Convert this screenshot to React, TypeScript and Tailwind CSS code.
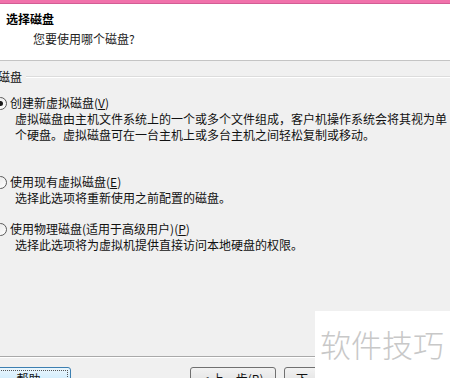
const options = [
  {
    label: "创建新虚拟磁盘",
    key: "V",
    checked: true,
    desc: [
      "虚拟磁盘由主机文件系统上的一个或多个文件组成，客户机操作系统会将其视为单",
      "个硬盘。虚拟磁盘可在一台主机上或多台主机之间轻松复制或移动。",
    ],
    gap: "mt-[10px]",
  },
  {
    label: "使用现有虚拟磁盘",
    key: "E",
    checked: false,
    desc: ["选择此选项将重新使用之前配置的磁盘。"],
    gap: "mt-[31px]",
  },
  {
    label: "使用物理磁盘(适用于高级用户)",
    key: "P",
    checked: false,
    desc: ["选择此选项将为虚拟机提供直接访问本地硬盘的权限。"],
    gap: "mt-[15px]",
  },
];

function Radio({ checked }: { checked: boolean }) {
  return (
    <span className="ml-[-6px] flex h-[13px] w-[13px] shrink-0 items-center justify-center rounded-full border border-[#5a5a5a] bg-gradient-to-br from-[#e6e6e6] to-white">
      {checked && <span className="h-[5px] w-[5px] rounded-full bg-[#1a1a1a]" />}
    </span>
  );
}

export default function App() {
  return (
    <div className="relative flex h-[378px] w-[450px] flex-col overflow-hidden bg-[#f0f0f0] font-['Noto_Sans_CJK_SC','Noto_Sans',sans-serif] text-[12px] text-[#111]">
      {/* title strip */}
      <div className="h-[4px] shrink-0 border-b border-[#d35d95] bg-[#f172ab]" />
      <div className="h-[57px] shrink-0 border-b border-[#c4c4c4] bg-white pl-[6px] pt-[6px]">
        <div className="font-bold leading-[18px] text-black">选择磁盘</div>
        <div className="ml-[27px] mt-[3px] leading-[16px] text-[#222]">您要使用哪个磁盘?</div>
      </div>

      <div className="flex-1 pt-[8px]">
        <div className="flex leading-[16px]">
          <span className="ml-[-2px]">磁盘</span>
          <span className="ml-[4px] mt-[7px] h-[2px] flex-1 border-t border-b border-t-[#dcdcdc] border-b-white" />
        </div>

        {options.map((o) => (
          <div key={o.key} className={o.gap}>
            <div className="flex items-center leading-[16px]">
              <Radio checked={o.checked} />
              <span className="ml-[3px]">
                {o.label}(<span className="underline">{o.key}</span>)
              </span>
            </div>
            <div className="ml-[15px] leading-[16px]">
              {o.desc.map((l) => (
                <div key={l} className="whitespace-nowrap">{l}</div>
              ))}
            </div>
          </div>
        ))}
      </div>

      <div className="h-[22px] shrink-0 border-t border-[#a9a9a9]">
        <div className="border-t border-white pt-[9px]">
          <div className="flex items-start">
            <button className="ml-[-14px] flex h-[23px] w-[85px] items-center justify-center rounded-[3px] border border-[#3c7fb1] bg-gradient-to-b from-[#eaf6fd] to-[#bee6fd] p-[2px] leading-[16px]">
              <span className="flex h-full w-full items-center justify-center border border-dotted border-[#555]">帮助</span>
            </button>
            <button className="ml-[119px] h-[23px] w-[86px] rounded-[3px] border border-[#707070] bg-gradient-to-b from-[#f2f2f2] to-[#dcdcdc] leading-[16px]">
              &lt; 上一步(<span className="underline">B</span>)
            </button>
            <button className="ml-[8px] h-[23px] w-[86px] rounded-[3px] border border-[#707070] bg-gradient-to-b from-[#f2f2f2] to-[#dcdcdc] leading-[16px]">
              下一步(<span className="underline">N</span>) &gt;
            </button>
          </div>
        </div>
      </div>

      {/* watermark */}
      <div className="absolute bottom-0 left-[315px] right-0 top-[311px] bg-white pl-[5px] pt-[17px] text-[31px] font-light leading-none text-[#c8c8c8]">
        软件技巧
      </div>
    </div>
  );
}
